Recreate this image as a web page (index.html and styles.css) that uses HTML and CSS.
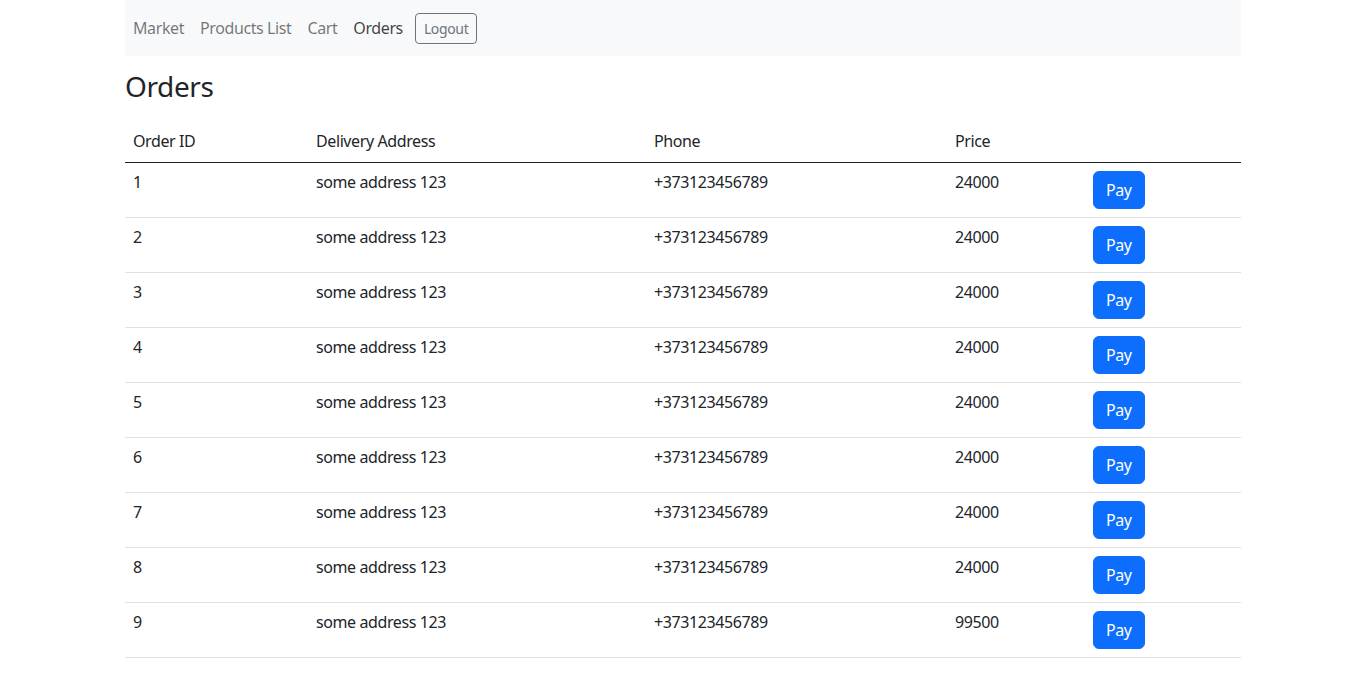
FILE: index.html
```html
<!DOCTYPE html>
<html lang="en">
<head>
<meta charset="utf-8">
<title>Orders</title>
<link rel="stylesheet" href="styles.css">
</head>
<body>
<div class="container">
  <nav class="navbar">
    <ul class="nav-list">
      <li><a class="nav-link" href="#">Market</a></li>
      <li><a class="nav-link" href="#">Products List</a></li>
      <li><a class="nav-link" href="#">Cart</a></li>
      <li><a class="nav-link active" href="#">Orders</a></li>
      <li><button class="btn-logout">Logout</button></li>
    </ul>
  </nav>
  <h3 class="title">Orders</h3>
  <table class="table">
    <colgroup>
      <col class="c1"><col class="c2"><col class="c3"><col class="c4"><col class="c5">
    </colgroup>
    <thead>
      <tr><th>Order ID</th><th>Delivery Address</th><th>Phone</th><th>Price</th><th></th></tr>
    </thead>
    <tbody>
      <tr><td>1</td><td>some address 123</td><td>+373123456789</td><td>24000</td><td><button class="btn-pay">Pay</button></td></tr>
      <tr><td>2</td><td>some address 123</td><td>+373123456789</td><td>24000</td><td><button class="btn-pay">Pay</button></td></tr>
      <tr><td>3</td><td>some address 123</td><td>+373123456789</td><td>24000</td><td><button class="btn-pay">Pay</button></td></tr>
      <tr><td>4</td><td>some address 123</td><td>+373123456789</td><td>24000</td><td><button class="btn-pay">Pay</button></td></tr>
      <tr><td>5</td><td>some address 123</td><td>+373123456789</td><td>24000</td><td><button class="btn-pay">Pay</button></td></tr>
      <tr><td>6</td><td>some address 123</td><td>+373123456789</td><td>24000</td><td><button class="btn-pay">Pay</button></td></tr>
      <tr><td>7</td><td>some address 123</td><td>+373123456789</td><td>24000</td><td><button class="btn-pay">Pay</button></td></tr>
      <tr><td>8</td><td>some address 123</td><td>+373123456789</td><td>24000</td><td><button class="btn-pay">Pay</button></td></tr>
      <tr><td>9</td><td>some address 123</td><td>+373123456789</td><td>99500</td><td><button class="btn-pay">Pay</button></td></tr>
    </tbody>
  </table>
</div>
</body>
</html>
```

FILE: styles.css
```css
* { box-sizing: border-box; }
html, body {
  margin: 0;
  padding: 0;
  font-family: "Noto Sans", "Open Sans", sans-serif;
  font-size: 16px;
  line-height: 1.5;
  letter-spacing: -0.025em;
  color: #212529;
  background: #fff;
}
.container {
  width: 1140px;
  margin: 0 auto;
  padding: 0 12px;
}
.navbar {
  background: #f8f9fa;
  padding: 8px 0;
  height: 56px;
}
.nav-list {
  list-style: none;
  margin: 0;
  padding: 0;
  display: flex;
  align-items: center;
}
.nav-link {
  display: block;
  padding: 8px;
  color: rgba(0, 0, 0, 0.55);
  text-decoration: none;
}
.nav-link.active { color: rgba(0, 0, 0, 0.75); }
.btn-logout {
  margin-left: 4px;
  font-family: inherit;
  font-size: 14px;
  line-height: 1.5;
  letter-spacing: -0.025em;
  padding: 4px 8px;
  color: #6c757d;
  background: transparent;
  border: 1px solid #6c757d;
  border-radius: 4px;
}
.title {
  margin: 14px 0 18px;
  font-size: 28px;
  font-weight: 400;
  line-height: 1.2;
}
.table {
  width: 100%;
  border-collapse: collapse;
  margin-bottom: 16px;
}
.c1 { width: 183px; }
.c2 { width: 338px; }
.c3 { width: 301px; }
.c4 { width: 138px; }
.c5 { width: 156px; }
.table th, .table td {
  text-align: left;
  vertical-align: top;
  font-weight: 400;
  border-bottom: 1px solid #dee2e6;
}
.table th {
  padding: 7px 8px 9px;
  border-bottom-color: #212529;
}
.table td { padding: 7px 8px 8px; }
.btn-pay {
  display: block;
  margin-top: 1px;
  font-family: inherit;
  font-size: 16px;
  line-height: 1.5;
  letter-spacing: -0.025em;
  padding: 6px 12px;
  color: #fff;
  background: #0d6efd;
  border: 1px solid #0d6efd;
  border-radius: 6px;
}
```
